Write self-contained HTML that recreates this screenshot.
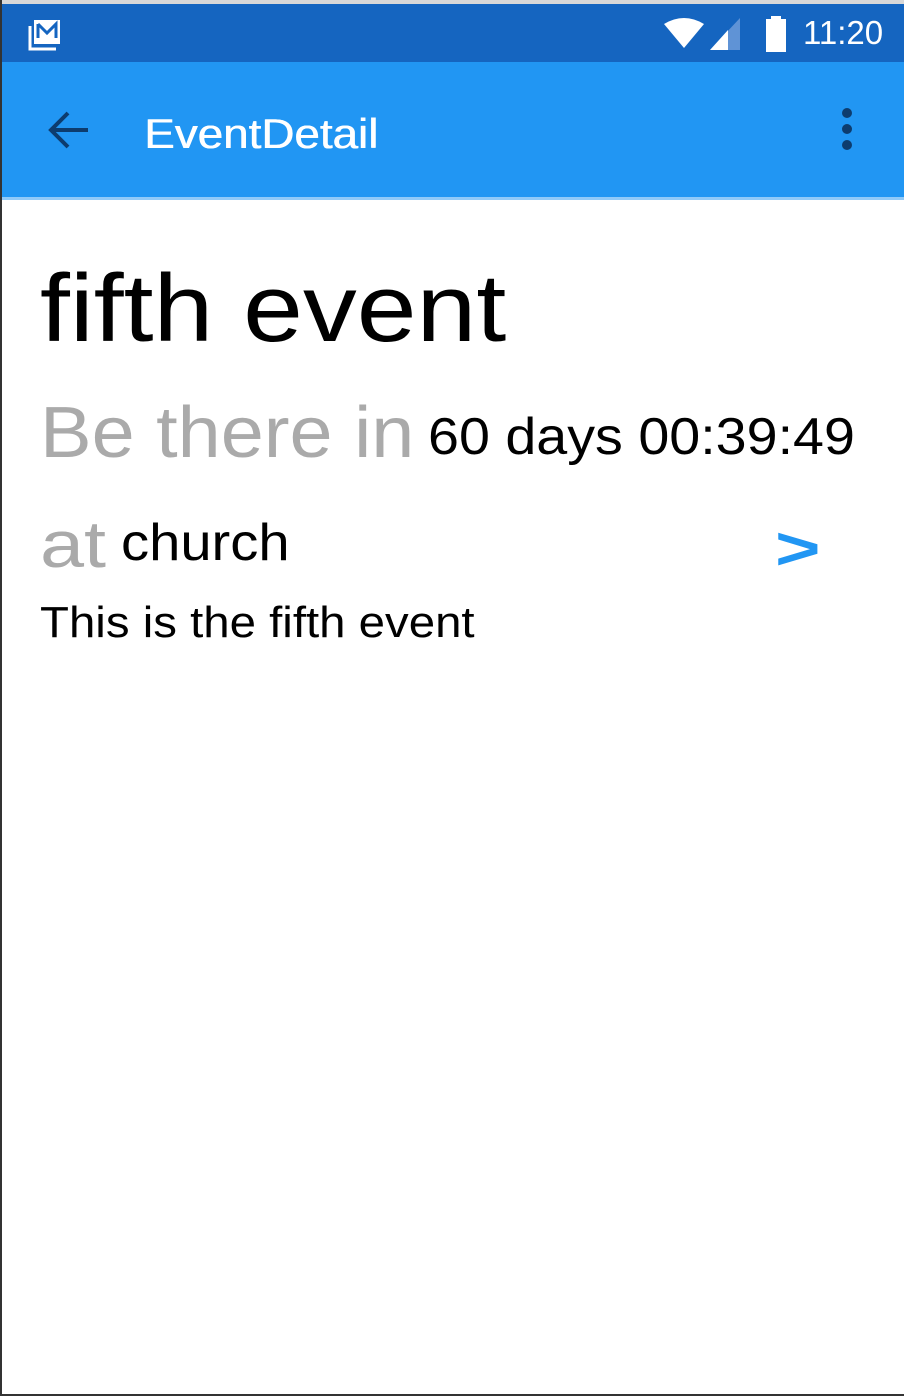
<!DOCTYPE html>
<html><head><meta charset="utf-8"><style>
html,body{margin:0;padding:0;width:904px;height:1396px;overflow:hidden;background:#fff;font-family:"Liberation Sans",sans-serif;}
.frame{position:absolute;left:0;top:0;width:904px;height:1396px;}
.top{position:absolute;left:0;top:0;width:904px;height:4px;background:#d8d8d8;}
.lb{position:absolute;left:0;top:0;width:2px;height:1396px;background:#333;}
.bb{position:absolute;left:0;bottom:0;width:904px;height:2px;background:#333;}
.status{position:absolute;left:2px;top:4px;width:902px;height:58px;background:#1565C0;}
.bar{position:absolute;left:2px;top:62px;width:902px;height:135px;background:#2196F3;}
.strip{position:absolute;left:2px;top:197px;width:902px;height:3px;background:#90CAF9;}
.t{position:absolute;white-space:nowrap;transform-origin:0 0;}
</style></head><body><div class="frame">
<div class="top"></div>
<div class="status">
 <svg style="position:absolute;left:26px;top:14px" width="36" height="34" viewBox="0 0 36 34"><rect x="6" y="2" width="26" height="24" fill="#fff"/><path d="M10 6 L10 20 M10 6 L19 15 L28 6 L28 20" stroke="#1565C0" stroke-width="3" fill="none"/><path d="M2 8 V31 H28" stroke="#fff" stroke-width="3" fill="none"/></svg>
 <svg style="position:absolute;left:662px;top:14px" width="40" height="32" viewBox="0 0 40 32"><path d="M0 6 Q20 -6 40 6 L20 30 Z" fill="#fff"/></svg>
 <svg style="position:absolute;left:708px;top:14px" width="34" height="32" viewBox="0 0 34 32"><path d="M30 0 V32 H0 Z" fill="#5f93d6"/><path d="M18 12 V32 H0 Z" fill="#fff"/></svg>
 <svg style="position:absolute;left:762px;top:12px" width="24" height="36" viewBox="0 0 24 36"><rect x="7" y="0" width="10" height="4" fill="#fff"/><rect x="2" y="3" width="20" height="33" fill="#fff"/></svg>
 <div class="t" style="left:801px;top:10px;font-size:33px;color:#fff;">11:20</div>
</div>
<div class="bar">
 <svg style="position:absolute;left:44px;top:48px" width="44" height="40" viewBox="0 0 44 40"><path d="M42 20 H6 M22 3 L5 20 L22 37" stroke="#0d3c6e" stroke-width="4" fill="none"/></svg>
 <div class="t" style="left:142px;top:48px;font-size:42px;color:#fff;transform:scaleX(1.09);text-shadow:0.6px 0 0 #fff;">EventDetail</div>
 <div style="position:absolute;left:840px;top:46px;width:10px;height:10px;border-radius:5px;background:#0d3c6e;box-shadow:0 16px 0 #0d3c6e,0 32px 0 #0d3c6e;"></div>
</div>
<div class="strip"></div>
<div class="t" style="left:40px;top:254px;font-size:96px;color:#000;transform:scaleX(1.12);">fifth event</div>
<div class="t" style="left:40px;top:392px;font-size:72px;color:#aaa;transform:scaleX(1.075);">Be there in</div>
<div class="t" style="left:428px;top:407px;font-size:52px;color:#000;transform:scaleX(1.07);">60 days 00:39:49</div>
<div class="t" style="left:40px;top:506px;font-size:66px;color:#aaa;transform:scaleX(1.2);">at</div>
<div class="t" style="left:121px;top:513px;font-size:52px;color:#000;transform:scaleX(1.08);">church</div>
<div class="t" style="left:775px;top:514px;font-size:60px;color:#2196F3;font-weight:bold;transform:scaleX(1.3);">&gt;</div>
<div class="t" style="left:40px;top:598px;font-size:44px;color:#000;transform:scaleX(1.077);">This is the fifth event</div>
<div class="lb"></div><div class="bb"></div>
</div></body></html>
